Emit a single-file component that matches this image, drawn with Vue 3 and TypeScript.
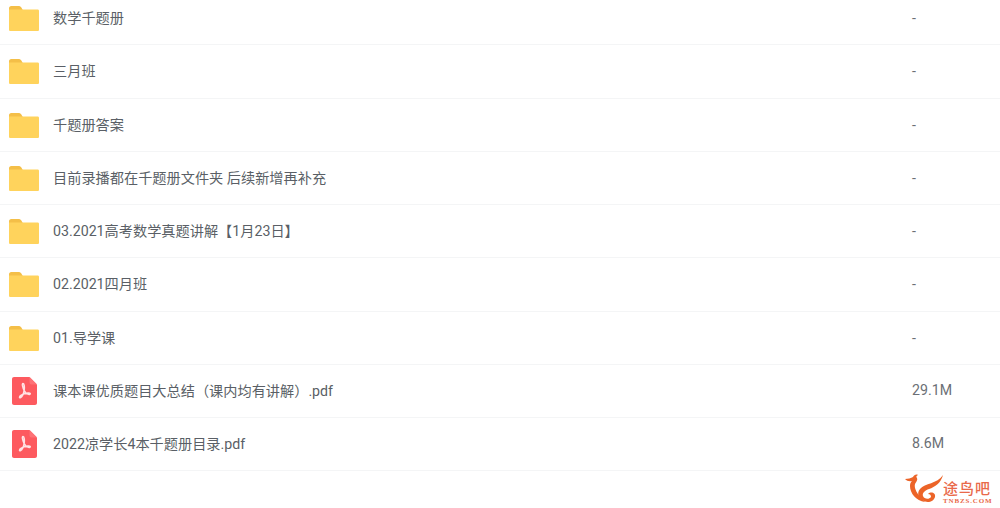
<template>
  <div class="page">
    <div class="list">
      <div v-for="row in rows" :key="row.name" class="row">
        <svg v-if="row.type === 'folder'" class="icon" viewBox="0 0 30 25">
          <path d="M0 2.200C0 1 .9 0 2.200 0h7.300c1.300 0 2.100.5 2.800 1.500L13.800 4H0z" fill="#f4bf48" />
          <path d="M0 3.500h28.700c.7 0 1.300.6 1.300 1.300v18.900c0 .7-.6 1.300-1.300 1.300H1.300C.6 25 0 24.400 0 23.700z" fill="#ffd35c" />
        </svg>
        <svg v-else class="icon pdf" viewBox="0 0 25 28">
          <path d="M2 0h15.500L25 7.500V26c0 1.100-.9 2-2 2H2c-1.100 0-2-.9-2-2V2C0 .9.900 0 2 0z" fill="#fd5a5f" />
          <path d="M17.500 0L25 7.500h-5.500c-1.100 0-2-.9-2-2z" fill="#fe7276" />
          <path d="M11 6.500c-1.200 0-.6 4 1.500 7.500 1.400 2.500 3.200 3.600 5 3.400 1.200-.2 1-1.300-.2-1.400-2.500-.3-6.500.8-8.800 2.600-1.300 1-1.200 2.600-.2 2.100 1.800-.8 3.600-4.600 4-8.500.3-2.800-.2-5.700-1.300-5.700z" fill="none" stroke="#ffe3e4" stroke-width="1.500" stroke-linejoin="round" />
        </svg>
        <span class="name">{{ row.name }}</span>
        <span class="size" :class="{ dash: row.size === '-' }">{{ row.size }}</span>
      </div>
    </div>
    <div class="watermark">
      <svg class="bird" viewBox="0 0 40 30">
        <path d="M1 5C4 5 7 4 9 3c1-2 3-3 5-2-2 1-2 2-1 3 1 2-1 4-2 6-1 4 1 9 10 18C12 27 6 19 6 12c0-3 1-4 2-5-3 .5-5 0-7-2z" fill="#ec6428" />
        <path d="M39 1c-2 8-8 12-14 14-4 1.500-7 4-6 7 1 3 6 4 8 1 0-2-1-3-3-3 3-3 8-1 7 3-1 4-6 6-10 4.500C15 25 12 20 16 15 21 9 33 10 39 1z" fill="#ec6428" />
      </svg>
      <div class="brand">
        <span class="brand-cn">途鸟吧</span>
        <span class="brand-en">TNBZS.COM</span>
      </div>
    </div>
  </div>
</template>

<script setup lang="ts">
interface Row {
  name: string;
  size: string;
  type: "folder" | "pdf";
}

const rows: Row[] = [
  { name: "数学千题册", size: "-", type: "folder" },
  { name: "三月班", size: "-", type: "folder" },
  { name: "千题册答案", size: "-", type: "folder" },
  { name: "目前录播都在千题册文件夹 后续新增再补充", size: "-", type: "folder" },
  { name: "03.2021高考数学真题讲解【1月23日】", size: "-", type: "folder" },
  { name: "02.2021四月班", size: "-", type: "folder" },
  { name: "01.导学课", size: "-", type: "folder" },
  { name: "课本课优质题目大总结（课内均有讲解）.pdf", size: "29.1M", type: "pdf" },
  { name: "2022凉学长4本千题册目录.pdf", size: "8.6M", type: "pdf" },
];
</script>

<style>
html,
body {
  background: #fff;
  overflow: hidden;
}
</style>

<style scoped>
.page {
  position: relative;
  width: 1000px;
  height: 508px;
  overflow: hidden;
  background: #fff;
  font-family: Roboto, "Noto Sans CJK SC", sans-serif;
}

.list {
  margin-top: -7.9px;
}

.row {
  display: flex;
  align-items: center;
  box-sizing: border-box;
  height: 53.25px;
  padding-left: 9px;
  border-bottom: 1px solid #f4f5f6;
}

.icon {
  flex: none;
  width: 30px;
  height: 25px;
  margin-top: 1px;
}

.icon.pdf {
  width: 25px;
  height: 28px;
  margin: 0 2.5px;
}

.name {
  flex: 1;
  margin: 0 0 2px 14px;
  font-size: 14.2px;
  color: #5a5f66;
}

.size {
  width: 88px;
  margin-bottom: 2px;
  font-size: 14.2px;
  color: #6b6f75;
}

.size.dash {
  margin-bottom: 0;
}

.watermark {
  position: absolute;
  left: 904px;
  top: 474px;
  display: flex;
  align-items: flex-end;
}

.bird {
  flex: none;
  width: 40px;
  height: 30px;
}

.brand {
  display: flex;
  flex-direction: column;
  margin: 0 0 -1px -1px;
  color: #e9694a;
  line-height: 1;
}

.brand-cn {
  font-size: 15px;
  font-weight: 500;
  letter-spacing: 1px;
}

.brand-en {
  margin-top: 1px;
  font-family: "Liberation Serif", serif;
  font-size: 7px;
  font-weight: 700;
  letter-spacing: 0.85px;
}
</style>
